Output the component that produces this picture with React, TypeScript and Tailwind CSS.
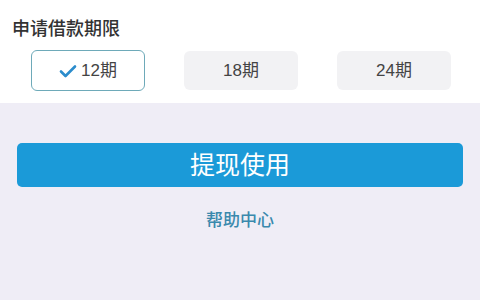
import React from "react";

const font = { fontFamily: '"Liberation Sans", "Noto Sans CJK SC", sans-serif' };

function Check() {
  return (
    <svg width="18" height="14" viewBox="0 0 18 14" className="mr-[4px]">
      <path d="M2 7.5 L6.5 12 L16 2.5" fill="none" stroke="#2b8ccc" strokeWidth="2.6" strokeLinecap="round" strokeLinejoin="round" />
    </svg>
  );
}

export default function App() {
  const opts = ["12期", "18期", "24期"];
  return (
    <div className="w-[480px] h-[300px] bg-[#efedf6] overflow-hidden text-[#333]" style={font}>
      <div className="bg-white h-[103px] pt-[17px]">
        <div className="pl-[12px] text-[18px] font-medium leading-[24px] text-[#333]">申请借款期限</div>
        <div className="flex gap-[39px] pl-[31px] mt-[9px]">
          {opts.map((o, i) =>
            i === 0 ? (
              <div key={o} className="w-[114px] h-[41px] rounded-[6px] border-[1.5px] border-[#6eaab9] bg-white flex items-center justify-center text-[17px] text-[#444]">
                <Check />
                {o}
              </div>
            ) : (
              <div key={o} className="w-[114px] h-[39px] mt-[1px] rounded-[6px] bg-[#f2f2f4] flex items-center justify-center text-[17px] text-[#444]">
                {o}
              </div>
            )
          )}
        </div>
      </div>
      <div className="px-[17px] mt-[40px]">
        <div className="h-[44px] rounded-[5px] bg-[#1b9ad8] flex items-center justify-center text-white text-[25px] leading-none">
          提现使用
        </div>
      </div>
      <div className="mt-[22px] text-center text-[17px] leading-[24px] text-[#3a89ad] font-medium">帮助中心</div>
    </div>
  );
}
